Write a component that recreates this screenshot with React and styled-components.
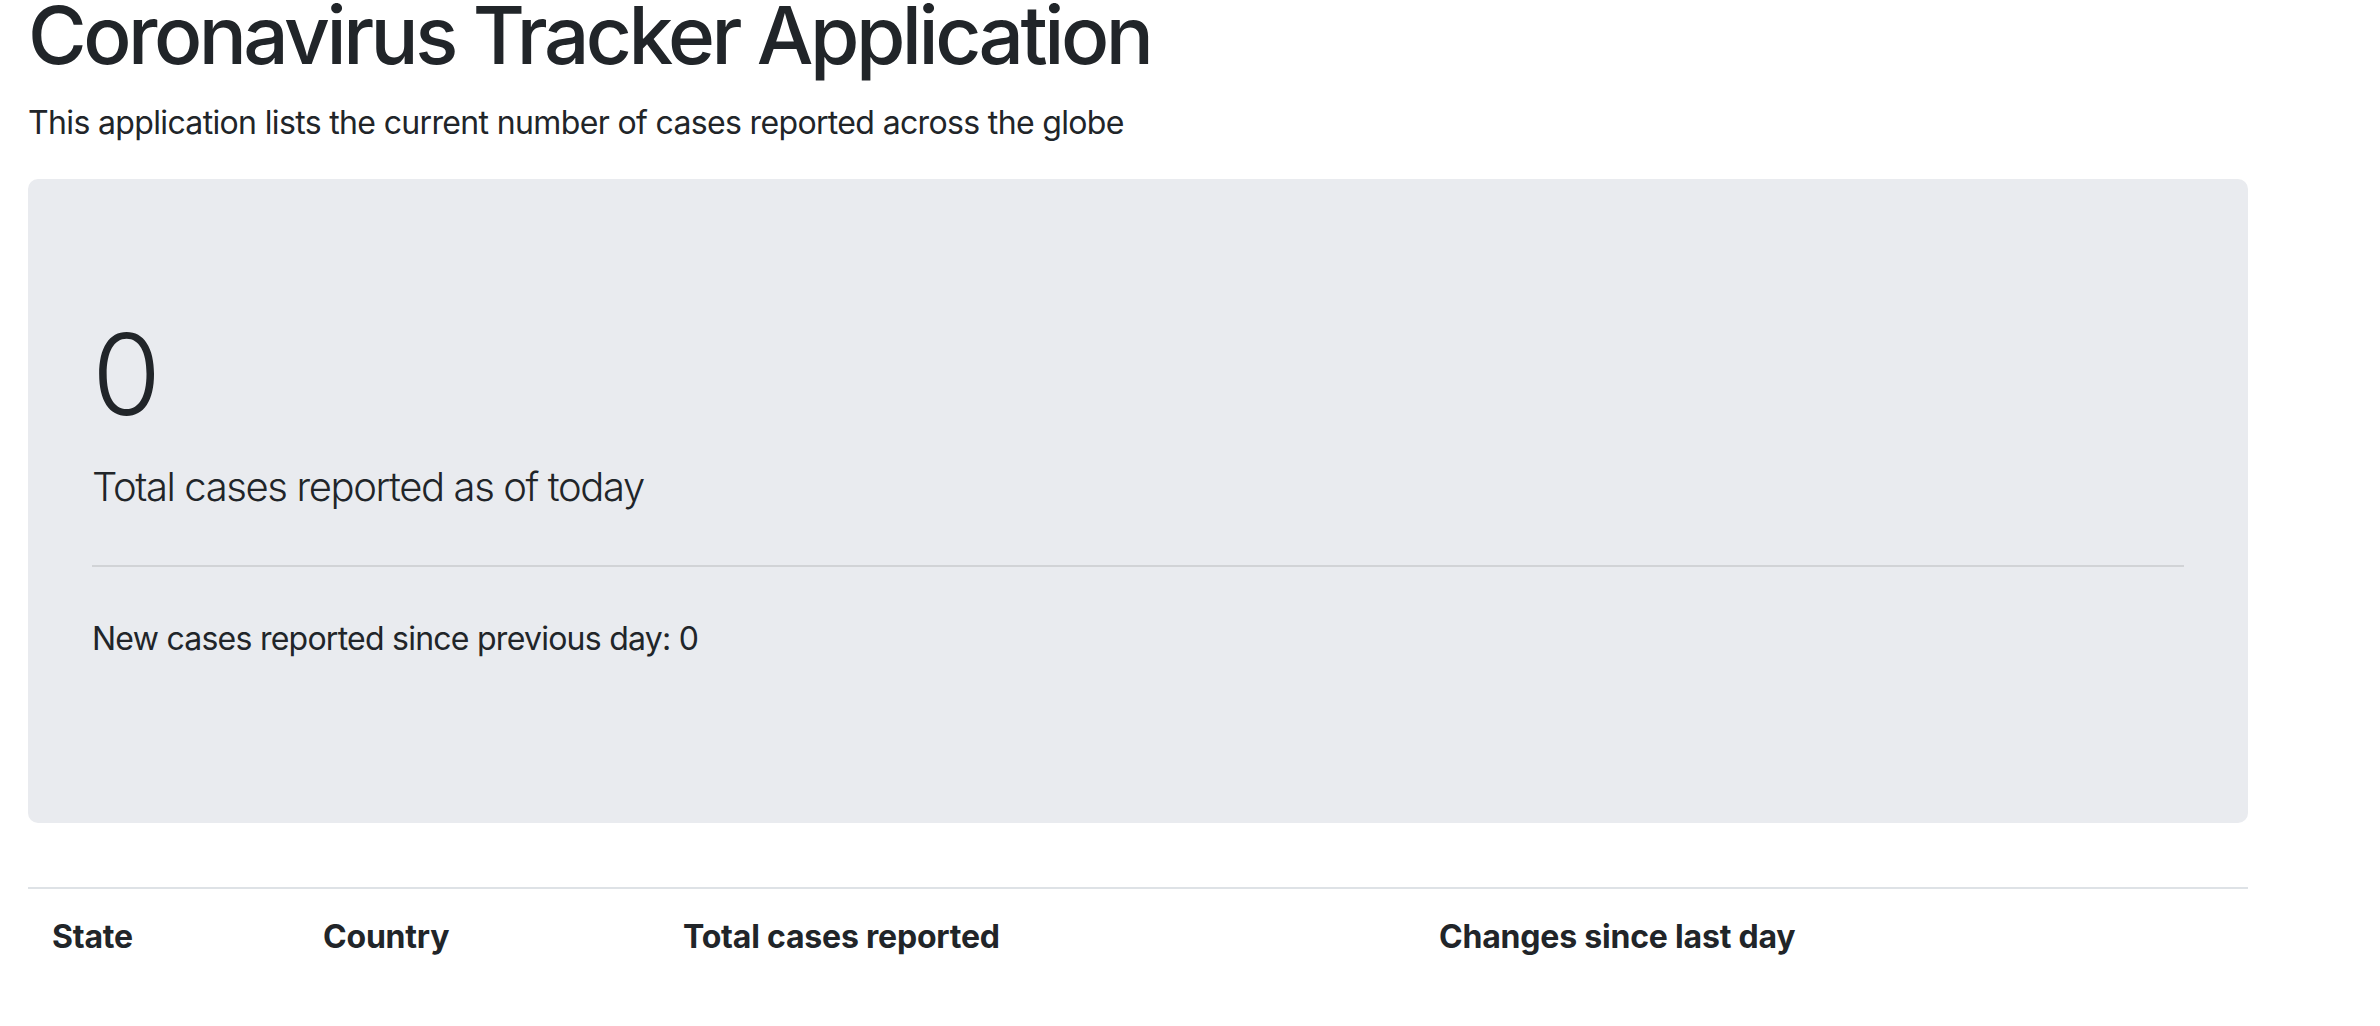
import React from "react";
import styled, { createGlobalStyle } from "styled-components";

const GlobalStyle = createGlobalStyle`
    *, *::before, *::after {
        box-sizing: border-box;
    }
    body {
        margin: 0;
        background: #fff;
        color: #212529;
        font-family: Inter, "Liberation Sans", Arial, sans-serif;
        font-size: 32px;
        line-height: 1.5;
    }
`;

const columns = [
    { label: "State", width: 271 },
    { label: "Country", width: 360 },
    { label: "Total cases reported", width: 756 },
    { label: "Changes since last day", width: 833 },
];

function App() {
    const totalCases = 0;
    const newCases = 0;

    return (
        <>
            <GlobalStyle />
            <StPage>
                <StTitle>Coronavirus Tracker Application</StTitle>
                <StIntro>This application lists the current number of cases reported across the globe</StIntro>
                <StJumbotron>
                    <StBigNumber>{totalCases}</StBigNumber>
                    <StLead>Total cases reported as of today</StLead>
                    <StDivider />
                    <StText>New cases reported since previous day: {newCases}</StText>
                </StJumbotron>
                <StTable>
                    <thead>
                        <tr>
                            {columns.map((col) => (
                                <StTh key={col.label} $width={col.width}>
                                    {col.label}
                                </StTh>
                            ))}
                        </tr>
                    </thead>
                    <tbody></tbody>
                </StTable>
            </StPage>
        </>
    );
}

const StPage = styled.div`
    width: 2248px;
    padding-left: 28px;
`;

const StTitle = styled.h1`
    margin: -13px 0 16px;
    font-size: 80px;
    font-weight: 500;
    line-height: 1.2;
    letter-spacing: -3.5px;
`;

const StIntro = styled.p`
    margin: 0 0 32px;
    letter-spacing: -0.65px;
`;

const StJumbotron = styled.div`
    background-color: #e9ebef;
    border-radius: 10px;
    padding: 128px 64px;
    margin-bottom: 64px;
`;

const StBigNumber = styled.h1`
    margin: 0 0 16px;
    font-size: 112px;
    font-weight: 300;
    line-height: 1.2;
`;

const StLead = styled.p`
    margin: 0;
    font-size: 40px;
    font-weight: 300;
    line-height: 1.5;
    letter-spacing: -1.4px;
`;

const StDivider = styled.hr`
    margin: 48px 0;
    border: 0;
    border-top: 2px solid rgba(0, 0, 0, 0.1);
`;

const StText = styled.p`
    margin: 0 0 32px;
    letter-spacing: -0.75px;
`;

const StTable = styled.table`
    width: 100%;
    border-collapse: collapse;
    table-layout: fixed;
`;

const StTh = styled.th`
    width: ${(props) => props.$width}px;
    padding: 24px;
    text-align: left;
    font-weight: 700;
    letter-spacing: -0.2px;
    border-top: 2px solid #dee2e6;
    vertical-align: bottom;
`;

export default App;
